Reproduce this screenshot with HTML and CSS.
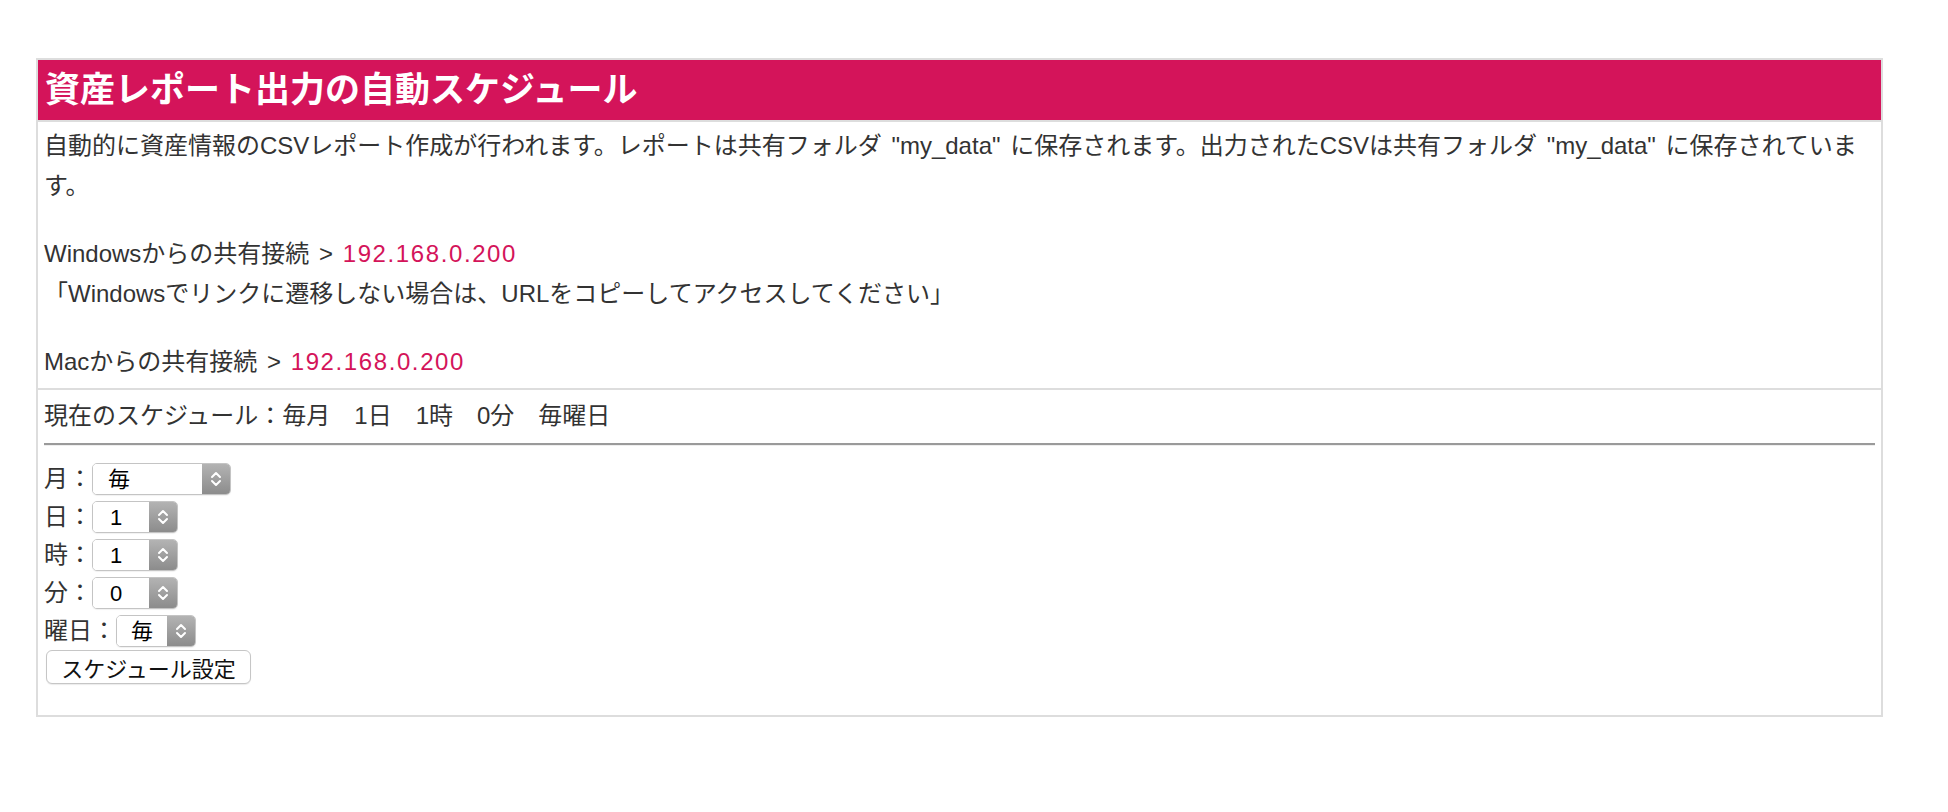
FILE: index.html
```html
<!DOCTYPE html>
<html lang="ja">
<head>
<meta charset="utf-8">
<title>資産レポート出力の自動スケジュール</title>
<link rel="stylesheet" href="styles.css">
</head>
<body>
<section class="panel">
  <h2 class="panel-title">資産レポート出力の自動スケジュール</h2>
  <div class="panel-desc">
    <p class="para">自動的に資産情報のCSVレポート作成が行われます。レポートは共有フォルダ "my_data" に保存されます。出力されたCSVは共有フォルダ "my_data" に保存されています。</p>
    <p class="para">Windowsからの共有接続 &gt; <a class="link" href="#">192.168.0.200</a><br>「Windowsでリンクに遷移しない場合は、URLをコピーしてアクセスしてください」</p>
    <p class="para">Macからの共有接続 &gt; <a class="link" href="#">192.168.0.200</a></p>
  </div>
  <form class="panel-form">
    <p class="current">現在のスケジュール：毎月　1日　1時　0分　毎曜日</p>
    <hr class="rule">
    <div class="rows">
      <div class="row">
        <span class="label">月：</span>
        <span class="sel sel-month">
          <select class="sel-input"><option selected>毎</option><option>1</option><option>2</option><option>3</option><option>4</option><option>5</option><option>6</option><option>7</option><option>8</option><option>9</option><option>10</option><option>11</option><option>12</option></select>
          <span class="sel-arrow"><svg width="14" height="20" viewBox="0 0 14 20"><path d="M3 8 L7 4 L11 8 M3 12 L7 16 L11 12" fill="none" stroke="#fff" stroke-width="2" stroke-linecap="round" stroke-linejoin="round"/></svg></span>
        </span>
      </div>
      <div class="row">
        <span class="label">日：</span>
        <span class="sel sel-num">
          <select class="sel-input"><option selected>1</option><option>2</option><option>3</option><option>4</option><option>5</option><option>10</option><option>15</option><option>20</option><option>25</option><option>28</option></select>
          <span class="sel-arrow"><svg width="14" height="20" viewBox="0 0 14 20"><path d="M3 8 L7 4 L11 8 M3 12 L7 16 L11 12" fill="none" stroke="#fff" stroke-width="2" stroke-linecap="round" stroke-linejoin="round"/></svg></span>
        </span>
      </div>
      <div class="row">
        <span class="label">時：</span>
        <span class="sel sel-num">
          <select class="sel-input"><option>0</option><option selected>1</option><option>2</option><option>3</option><option>6</option><option>12</option><option>18</option><option>23</option></select>
          <span class="sel-arrow"><svg width="14" height="20" viewBox="0 0 14 20"><path d="M3 8 L7 4 L11 8 M3 12 L7 16 L11 12" fill="none" stroke="#fff" stroke-width="2" stroke-linecap="round" stroke-linejoin="round"/></svg></span>
        </span>
      </div>
      <div class="row">
        <span class="label">分：</span>
        <span class="sel sel-num">
          <select class="sel-input"><option selected>0</option><option>10</option><option>20</option><option>30</option><option>40</option><option>50</option></select>
          <span class="sel-arrow"><svg width="14" height="20" viewBox="0 0 14 20"><path d="M3 8 L7 4 L11 8 M3 12 L7 16 L11 12" fill="none" stroke="#fff" stroke-width="2" stroke-linecap="round" stroke-linejoin="round"/></svg></span>
        </span>
      </div>
      <div class="row">
        <span class="label">曜日：</span>
        <span class="sel sel-week">
          <select class="sel-input"><option selected>毎</option><option>日</option><option>月</option><option>火</option><option>水</option><option>木</option><option>金</option><option>土</option></select>
          <span class="sel-arrow"><svg width="14" height="20" viewBox="0 0 14 20"><path d="M3 8 L7 4 L11 8 M3 12 L7 16 L11 12" fill="none" stroke="#fff" stroke-width="2" stroke-linecap="round" stroke-linejoin="round"/></svg></span>
        </span>
      </div>
      <div class="row row-btn">
        <button type="button" class="btn">スケジュール設定</button>
      </div>
    </div>
  </form>
</section>
</body>
</html>
```

FILE: styles.css
```css
html, body {
  margin: 0;
  padding: 0;
  background: #fff;
}

body {
  padding: 58px 0 0 36px;
  font-family: "Liberation Sans", "Noto Sans CJK JP", sans-serif;
  color: #333;
  font-size: 24px;
}

.panel {
  box-sizing: border-box;
  width: 1847px;
  border: 2px solid #dddddd;
}

.panel-title {
  margin: 0;
  height: 60px;
  line-height: 60px;
  padding: 0 0 0 7px;
  background: #d4145a;
  color: #fff;
  font-size: 35px;
  font-weight: bold;
  border-bottom: 2px solid #dddddd;
}

.panel-desc {
  padding: 4px 6px 6px 6px;
  border-bottom: 2px solid #dddddd;
  word-spacing: 3px;
}

.para {
  margin: 0 0 28px 0;
  line-height: 40px;
}

.para:last-child {
  margin-bottom: 0;
}

.link {
  color: #d4145a;
  text-decoration: none;
  letter-spacing: 1.6px;
}

.panel-form {
  padding: 6px 6px 31px 6px;
}

.current {
  margin: 0;
  line-height: 39px;
}

.rule {
  margin: 8px 0 17px 0;
  height: 0;
  border: none;
  border-top: 2px solid #9a9a9a;
  border-bottom: 1px solid #eeeeee;
}

.rows {
  display: flex;
  flex-direction: column;
  gap: 6px;
}

.row {
  display: flex;
  align-items: center;
  height: 32px;
}

.row-btn {
  height: 34px;
  margin-top: -3px;
}

.label {
  line-height: 32px;
}

.sel {
  box-sizing: border-box;
  display: inline-flex;
  height: 32px;
  border: 1px solid #c4c4c4;
  border-radius: 5px;
  overflow: hidden;
  background: #fff;
  box-shadow: 0 1px 1px rgba(0, 0, 0, 0.06);
}

.sel-month { width: 139px; }
.sel-num { width: 86px; }
.sel-week { width: 80px; }

.sel-input {
  appearance: none;
  -webkit-appearance: none;
  flex: 1;
  min-width: 0;
  border: none;
  outline: none;
  background: #fff;
  margin: 0;
  padding: 0 0 0 15px;
  font-family: "Liberation Sans", "Noto Sans CJK JP", sans-serif;
  font-size: 22px;
  color: #000;
}

.sel-num .sel-input { padding-left: 17px; }
.sel-week .sel-input { padding-left: 14px; }

.sel-arrow {
  width: 28px;
  flex: none;
  display: flex;
  align-items: center;
  justify-content: center;
  background: linear-gradient(#b3b3b3, #8c8c8c);
}

.btn {
  box-sizing: border-box;
  width: 205px;
  height: 34px;
  margin: 0 0 0 2px;
  padding: 0;
  border: 1px solid #c6c6c6;
  border-radius: 6px;
  background: #fff;
  box-shadow: 0 1px 1px rgba(0, 0, 0, 0.08);
  font-family: "Liberation Sans", "Noto Sans CJK JP", sans-serif;
  font-size: 22px;
  color: #111;
}
```
